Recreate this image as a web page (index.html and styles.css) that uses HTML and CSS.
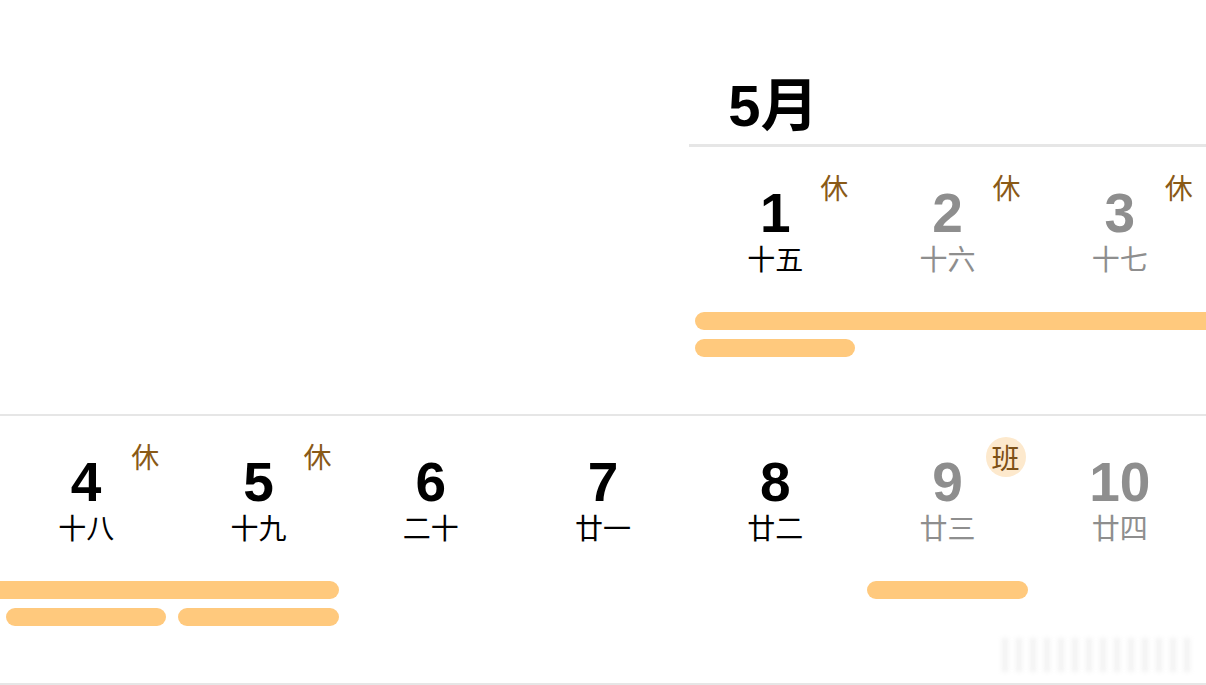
FILE: index.html
```html
<!DOCTYPE html>
<html lang="zh">
<head>
<meta charset="utf-8">
<title>5月</title>
<link rel="stylesheet" href="styles.css">
</head>
<body>
<div class="cal">
  <div class="month-row">
    <div class="month-title">5月</div>
  </div>

  <div class="week week-first">
    <div class="day empty"></div>
    <div class="day empty"></div>
    <div class="day empty"></div>
    <div class="day empty"></div>
    <div class="day"><span class="num">1</span><span class="lunar">十五</span><span class="tag">休</span></div>
    <div class="day muted"><span class="num">2</span><span class="lunar">十六</span><span class="tag">休</span></div>
    <div class="day muted"><span class="num">3</span><span class="lunar">十七</span><span class="tag">休</span></div>

    <div class="ev ev-a1 cont-right"></div>
    <div class="ev ev-a2"></div>
  </div>

  <div class="week week-second">
    <div class="day"><span class="num">4</span><span class="lunar">十八</span><span class="tag">休</span></div>
    <div class="day"><span class="num">5</span><span class="lunar">十九</span><span class="tag">休</span></div>
    <div class="day"><span class="num">6</span><span class="lunar">二十</span></div>
    <div class="day"><span class="num">7</span><span class="lunar">廿一</span></div>
    <div class="day"><span class="num">8</span><span class="lunar">廿二</span></div>
    <div class="day muted"><span class="num">9</span><span class="lunar">廿三</span><span class="tag tag-work">班</span></div>
    <div class="day muted"><span class="num">10</span><span class="lunar">廿四</span></div>

    <div class="ev ev-b1 cont-left"></div>
    <div class="ev ev-b2"></div>
    <div class="ev ev-b3"></div>
    <div class="ev ev-b4"></div>
  </div>
</div>
<div class="watermark"></div>
</body>
</html>
```

FILE: styles.css
```css
html, body {
  margin: 0;
  padding: 0;
  background: #ffffff;
}

body {
  position: relative;
  width: 1206px;
  height: 685px;
  overflow: hidden;
  font-family: "Liberation Sans", "Noto Sans CJK SC", sans-serif;
  color: #000000;
}

.cal {
  display: flex;
  flex-direction: column;
}

.month-row {
  display: grid;
  grid-template-columns: repeat(7, 1fr);
  height: 147px;
}

.month-title {
  grid-column: 5 / 8;
  align-self: end;
  border-bottom: 3px solid #e6e6e6;
  padding: 0 0 9px 39px;
  font-size: 58px;
  line-height: 58px;
  font-weight: bold;
  font-family: "Liberation Sans", "Noto Sans CJK SC", sans-serif;
}

.week {
  display: grid;
  grid-template-columns: repeat(7, 1fr);
  grid-template-rows: 156px 18px 18px;
  row-gap: 9px;
  height: 267px;
  box-sizing: border-box;
}

.week-second {
  border-top: 2px solid #e6e6e6;
  border-bottom: 2px solid #e6e6e6;
  height: 271px;
}

.day {
  grid-row: 1;
  position: relative;
  display: flex;
  flex-direction: column;
  align-items: center;
  padding-top: 39px;
}

.num {
  font-family: "Liberation Sans", sans-serif;
  font-weight: bold;
  font-size: 55px;
  line-height: 55px;
  color: #000000;
}

.lunar {
  margin-top: 3px;
  font-family: "Noto Sans CJK SC", sans-serif;
  font-size: 28px;
  line-height: 28px;
  color: #000000;
}

.muted .num,
.muted .lunar {
  color: #8e8e8e;
}

.tag {
  position: absolute;
  top: 26px;
  left: calc(50% + 45px);
  font-family: "Noto Sans CJK SC", sans-serif;
  font-size: 28px;
  line-height: 28px;
  color: #8a5a17;
}

.tag-work {
  top: 21px;
  left: calc(50% + 38px);
  width: 40px;
  height: 40px;
  border-radius: 50%;
  background: #fde9cd;
  display: flex;
  align-items: center;
  justify-content: center;
  color: #7d5016;
}

.ev {
  height: 18px;
  border-radius: 9px;
  background: #ffc97d;
  margin: 0 6px;
}

.ev.cont-right {
  margin-right: 0;
  border-radius: 9px 0 0 9px;
}

.ev.cont-left {
  margin-left: 0;
  border-radius: 0 9px 9px 0;
}

.ev-a1 { grid-row: 2; grid-column: 5 / 8; }
.ev-a2 { grid-row: 3; grid-column: 5 / 6; }

.ev-b1 { grid-row: 2; grid-column: 1 / 3; }
.ev-b2 { grid-row: 2; grid-column: 6 / 7; }
.ev-b3 { grid-row: 3; grid-column: 1 / 2; }
.ev-b4 { grid-row: 3; grid-column: 2 / 3; }

.watermark {
  position: absolute;
  left: 1000px;
  top: 638px;
  width: 195px;
  height: 34px;
  background: repeating-linear-gradient(90deg, rgba(200,200,200,0) 0px, rgba(200,200,200,0.5) 5px, rgba(200,200,200,0) 10px, rgba(200,200,200,0) 14px);
  filter: blur(2px);
  opacity: 0.6;
}
```
